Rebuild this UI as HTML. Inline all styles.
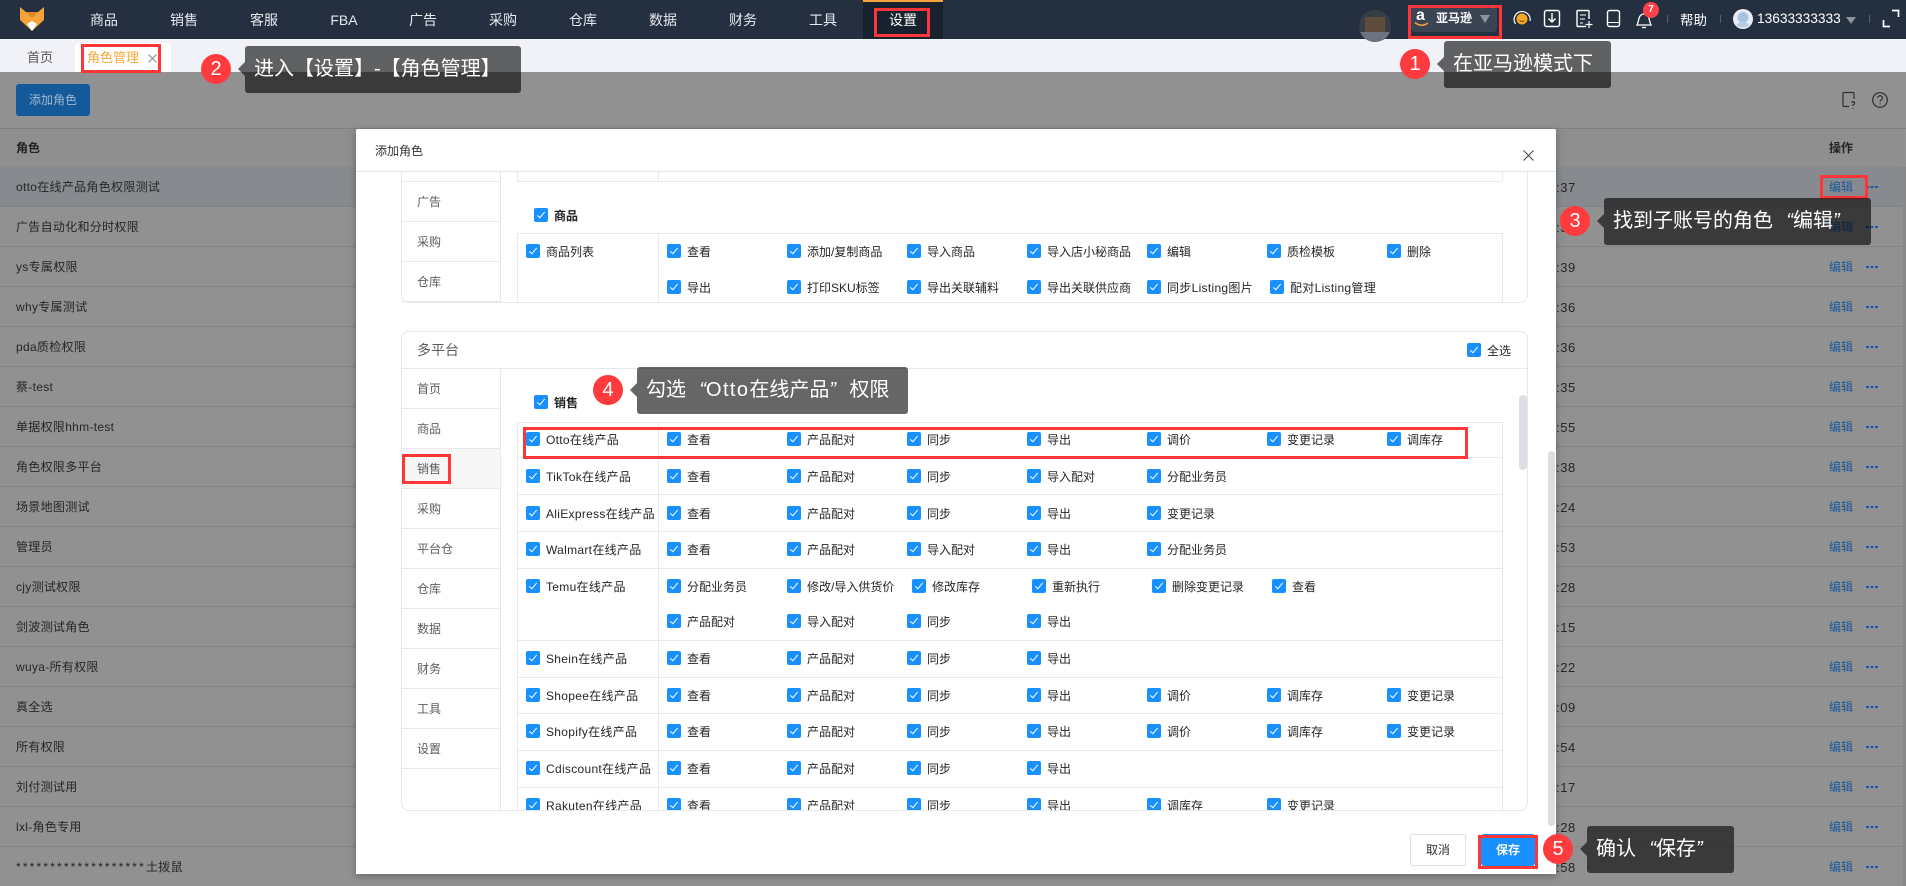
<!DOCTYPE html>
<html lang="zh-CN">
<head>
<meta charset="utf-8">
<title>角色管理</title>
<style>
html,body{margin:0;padding:0;width:1906px;height:886px;overflow:hidden;background:#919191}
body{position:relative;font:12px/1.2 "Liberation Sans","Noto Sans CJK SC",sans-serif;color:#333}
div,span,b,i{position:absolute;white-space:nowrap}
em{font-style:normal}
.qo,.qc{display:inline-block;width:20px;font-style:italic}
.qo{text-align:right}
.qc{text-align:left}
.nav{top:11px;width:80px;text-align:center;font-size:14px;line-height:18px;color:#e6e9ee}
.rb{border:3px solid #ff3538;box-sizing:border-box;z-index:30}
.n{width:30px;height:30px;border-radius:50%;background:#ff3b3d;color:#fff;font-size:20px;line-height:30px;text-align:center;z-index:40}
.t{background:rgba(0,0,0,.6);color:#fff;font-size:20px;line-height:47px;height:47px;border-radius:3px;z-index:40;box-sizing:border-box;padding-left:9px}
.t:before{content:"";position:absolute;left:-7px;top:16px;border:7px solid transparent;border-left:0;border-right-color:rgba(0,0,0,.6)}
.r{left:0;width:1903px;height:40px;border-bottom:1px solid #858585;box-sizing:border-box;line-height:41px;color:#262626}
.r span{top:0}
.r .a{left:16px;letter-spacing:.3px}
.r .a em{letter-spacing:2.17px}
.r .s{left:1556px;font-size:13px;letter-spacing:.6px}
.r .e{left:1829px;color:#1c5a9c}
.r i{left:1866px;top:19px;width:3px;height:2px;background:#1c5a9c;box-shadow:4.5px 0 #1c5a9c,9px 0 #1c5a9c}
.c{height:14px;line-height:17px;padding-left:20px;color:#262626}
.c:before{content:"";position:absolute;left:0;top:0;width:14px;height:14px;background:#1890ff;border-radius:2px}
.c:after{content:"";position:absolute;left:5px;top:2px;width:3px;height:7px;border:solid #fff;border-width:0 1px 1px 0;transform:rotate(40deg)}
.c.l{letter-spacing:.3px}
.c.bd{font-weight:bold;color:#222}
.h{left:517px;width:985px;height:1px;background:#e6e8eb}
.mh{left:401px;width:99px;height:1px;background:#e6e8eb}
.v{width:1px;background:#e6e8eb}
.mi{left:417px;color:#5c5c5c;line-height:16px}
</style>
</head>
<body>

<!-- top bar -->
<div style="left:0;top:0;width:1906px;height:39px;background:#242f40"></div>
<svg style="position:absolute;left:0;top:0" width="60" height="39" viewBox="0 0 60 39">
<polygon points="20,7 26,12 38,12 44,7 44,20 32,31 20,20" fill="#f5a23a"/>
<polygon points="26,12 38,12 32,18" fill="#dc8a2c"/>
<polygon points="27,24 32,21 37,24 32,31" fill="#fff"/>
</svg>
<div class="nav" style="left:64px">商品</div>
<div class="nav" style="left:144px">销售</div>
<div class="nav" style="left:224px">客服</div>
<div class="nav" style="left:304px">FBA</div>
<div class="nav" style="left:383px">广告</div>
<div class="nav" style="left:463px">采购</div>
<div class="nav" style="left:543px">仓库</div>
<div class="nav" style="left:623px">数据</div>
<div class="nav" style="left:703px">财务</div>
<div class="nav" style="left:783px">工具</div>
<div style="left:863px;top:0;width:80px;height:39px;background:#18212e"></div>
<div style="left:863px;top:0;width:80px;height:2px;background:#f5a23a"></div>
<div class="nav" style="left:863px;color:#fff">设置</div>

<!-- avatar blurred -->
<div style="left:1359px;top:10px;width:32px;height:32px;border-radius:50%;overflow:hidden;background:#373d47;z-index:2">
<div style="left:6px;top:7px;width:20px;height:15px;background:#5f4c3a"></div>
<div style="left:0;top:22px;width:32px;height:10px;background:#6d7480"></div>
</div>

<!-- amazon selector -->
<div style="left:1411px;top:6px;width:86px;height:26px;background:#3a4453;border-radius:4px"></div>
<b style="left:1416px;top:7px;font-size:16px;line-height:18px;color:#fff">a</b>
<svg style="position:absolute;left:1414px;top:21px" width="16" height="7" viewBox="0 0 16 7"><path d="M1 1.500C5 5 10 5 14 2" fill="none" stroke="#f5a23a" stroke-width="1.500"/></svg>
<b style="left:1436px;top:11px;font-size:12px;line-height:14px;color:#fff">亚马逊</b>
<div style="left:1480px;top:15px;border:5px solid transparent;border-top:8px solid #8e929a;border-bottom:0"></div>

<!-- top icons -->
<svg style="position:absolute;left:1510px;top:6px" width="150" height="26" viewBox="1510 6 150 26" fill="none">
<circle cx="1522" cy="19" r="5.500" fill="#f5a623"/>
<path d="M1515.500 24A8 8 0 1 1 1530 21" stroke="#fff" stroke-width="1.200"/>
<path d="M1519.500 20.500Q1522 22.500 1524.500 20.500" stroke="#7a4a10"/>
<rect x="1544.500" y="10.500" width="15" height="16" rx="2" stroke="#fff" stroke-width="1.400"/>
<path d="M1552 13V22M1548.500 18.500L1552 22L1555.500 18.500" stroke="#fff" stroke-width="1.400"/>
<path d="M1589 19V11.500a1 1 0 0 0-1-1H1578a1 1 0 0 0-1 1V25.500a1 1 0 0 0 1 1H1586" stroke="#fff" stroke-width="1.400"/>
<path d="M1580 15H1586M1580 19H1585M1580 23H1583" stroke="#fff"/>
<path d="M1589 21V28M1585.500 24.500H1592.500" stroke="#fff" stroke-width="1.200"/>
<rect x="1607.500" y="10.500" width="12" height="16" rx="2" stroke="#fff" stroke-width="1.400"/>
<path d="M1608 22.500H1619" stroke="#fff"/>
<path d="M1637 25C1639 22 1638 14 1644 14C1650 14 1649 22 1651 25Z" stroke="#fff" stroke-width="1.300"/>
<path d="M1642 27.500H1646" stroke="#fff" stroke-width="1.300"/>
</svg>
<div style="left:1643px;top:2px;width:16px;height:16px;border-radius:50%;background:#ff4048;color:#fff;font-size:10px;font-weight:bold;line-height:16px;text-align:center">7</div>
<div style="left:1667px;top:15px;width:1px;height:8px;background:#566072"></div>
<div style="left:1680px;top:12px;font-size:13.500px;line-height:17px;color:#fff">帮助</div>
<div style="left:1720px;top:15px;width:1px;height:8px;background:#566072"></div>
<svg style="position:absolute;left:1733px;top:9px" width="20" height="20" viewBox="0 0 20 20">
<circle cx="10" cy="10" r="10" fill="#e9edf3"/><circle cx="10" cy="8.500" r="5.500" fill="#a9c3e2"/>
<path d="M3.500 16C6 12.500 14 12.500 16.500 16A10 10 0 0 1 3.500 16Z" fill="#b7cbe3"/>
</svg>
<div style="left:1757px;top:11px;font-size:13.700px;line-height:16px;color:#fff">13633333333</div>
<div style="left:1846px;top:17px;border:5.500px solid transparent;border-top:7px solid #8e929a;border-bottom:0"></div>
<div style="left:1869px;top:15px;width:1px;height:8px;background:#566072"></div>
<svg style="position:absolute;left:1882px;top:9px" width="18" height="19" viewBox="0 0 18 19" fill="none" stroke="#fff" stroke-width="1.700">
<path d="M10 1.500H16.500V8M1.500 11V17.500H8"/>
</svg>

<!-- tab bar -->
<div style="left:0;top:39px;width:1906px;height:33px;background:#f0f2f7"></div>
<div style="left:27px;top:50px;font-size:13px;line-height:16px;color:#555">首页</div>
<div style="left:75px;top:43px;width:96px;height:29px;background:#fff;border-radius:4px 4px 0 0"></div>
<div style="left:87px;top:50px;font-size:13px;line-height:16px;color:#f8a83e">角色管理</div>
<svg style="position:absolute;left:148px;top:54px" width="9" height="9" viewBox="0 0 9 9"><path d="M.5 .5L8.500 8.500M8.500 .5L.5 8.500" stroke="#888" fill="none"/></svg>

<!-- masked page -->
<div style="left:16px;top:84px;width:74px;height:32px;background:#145a9b;border-radius:3px;color:#9fb7ce;line-height:32px;text-align:center">添加角色</div>
<svg style="position:absolute;left:1840px;top:90px" width="52" height="20" viewBox="0 0 52 20" fill="none" stroke="#2f2f2f" stroke-width="1.200">
<path d="M14 9V3.500a1 1 0 0 0-1-1H4a1 1 0 0 0-1 1V15.500a1 1 0 0 0 1 1H9"/>
<path d="M11.500 12.500q1.500-2 3 0q.5 1.500-1.500 2.500v1M13 18v.800"/>
<circle cx="40" cy="10" r="7.300"/>
<path d="M37.700 8c0-3 4.800-3 4.800 0c0 1.800-2.400 1.800-2.400 3.800M40.100 13.200v1"/>
</svg>
<div style="left:0;top:128px;width:1906px;height:1px;background:#808080"></div>
<div style="left:0;top:129px;width:1903px;height:38px;background:#8f8f8f;border-bottom:1px solid #858585;box-sizing:content-box"></div>
<b style="left:16px;top:141px;color:#222;line-height:15px">角色</b>
<b style="left:1829px;top:141px;color:#222;line-height:15px">操作</b>
<div style="left:1903px;top:167px;width:3px;height:719px;background:#888"></div>

<div class="r" style="top:167px;background:#878a8e"><span class="a">otto在线产品角色权限测试</span><span class="s">:37</span><span class="e">编辑</span><i></i></div>
<div class="r" style="top:207px"><span class="a">广告自动化和分时权限</span><span class="s">:37</span><span class="e">编辑</span><i></i></div>
<div class="r" style="top:247px"><span class="a">ys专属权限</span><span class="s">:39</span><span class="e">编辑</span><i></i></div>
<div class="r" style="top:287px"><span class="a">why专属测试</span><span class="s">:36</span><span class="e">编辑</span><i></i></div>
<div class="r" style="top:327px"><span class="a">pda质检权限</span><span class="s">:36</span><span class="e">编辑</span><i></i></div>
<div class="r" style="top:367px"><span class="a">蔡-test</span><span class="s">:35</span><span class="e">编辑</span><i></i></div>
<div class="r" style="top:407px"><span class="a">单据权限hhm-test</span><span class="s">:55</span><span class="e">编辑</span><i></i></div>
<div class="r" style="top:447px"><span class="a">角色权限多平台</span><span class="s">:38</span><span class="e">编辑</span><i></i></div>
<div class="r" style="top:487px"><span class="a">场景地图测试</span><span class="s">:24</span><span class="e">编辑</span><i></i></div>
<div class="r" style="top:527px"><span class="a">管理员</span><span class="s">:53</span><span class="e">编辑</span><i></i></div>
<div class="r" style="top:567px"><span class="a">cjy测试权限</span><span class="s">:28</span><span class="e">编辑</span><i></i></div>
<div class="r" style="top:607px"><span class="a">剑波测试角色</span><span class="s">:15</span><span class="e">编辑</span><i></i></div>
<div class="r" style="top:647px"><span class="a">wuya-所有权限</span><span class="s">:22</span><span class="e">编辑</span><i></i></div>
<div class="r" style="top:687px"><span class="a">真全选</span><span class="s">:09</span><span class="e">编辑</span><i></i></div>
<div class="r" style="top:727px"><span class="a">所有权限</span><span class="s">:54</span><span class="e">编辑</span><i></i></div>
<div class="r" style="top:767px"><span class="a">刘付测试用</span><span class="s">:17</span><span class="e">编辑</span><i></i></div>
<div class="r" style="top:807px"><span class="a">lxl-角色专用</span><span class="s">:28</span><span class="e">编辑</span><i></i></div>
<div class="r" style="top:847px"><span class="a"><em>*******************</em>土拨鼠</span><span class="s">:58</span><span class="e">编辑</span><i></i></div>

<!-- modal -->
<div style="left:356px;top:129px;width:1200px;height:745px;background:#fff;box-shadow:0 2px 8px rgba(0,0,0,.3);border-radius:2px 2px 0 0"></div>

<!-- upper card -->
<div style="left:401px;top:150px;width:1127px;height:153px;border:1px solid #e6e8eb;border-top:0;box-sizing:border-box;border-radius:0 0 8px 8px"></div>
<div class="v" style="left:500px;top:172px;height:130px"></div>
<div class="mh" style="top:181px"></div><div class="mh" style="top:221px"></div><div class="mh" style="top:261px"></div><div class="mh" style="top:301px"></div>
<div class="mi" style="top:194px">广告</div>
<div class="mi" style="top:234px">采购</div>
<div class="mi" style="top:274px">仓库</div>
<div class="v" style="left:517px;top:172px;height:9px"></div>
<div class="v" style="left:658px;top:172px;height:9px"></div>
<div class="v" style="left:1502px;top:172px;height:9px"></div>
<div class="h" style="top:181px"></div>
<div class="c bd" style="left:534px;top:208px">商品</div>
<div class="h" style="top:233px"></div>
<div class="v" style="left:517px;top:233px;height:70px"></div>
<div class="v" style="left:658px;top:233px;height:70px"></div>
<div class="v" style="left:1502px;top:233px;height:70px"></div>
<div class="c" style="left:526px;top:244px">商品列表</div>
<div class="c" style="left:667px;top:244px">查看</div>
<div class="c" style="left:787px;top:244px">添加/复制商品</div>
<div class="c" style="left:907px;top:244px">导入商品</div>
<div class="c" style="left:1027px;top:244px">导入店小秘商品</div>
<div class="c" style="left:1147px;top:244px">编辑</div>
<div class="c" style="left:1267px;top:244px">质检模板</div>
<div class="c" style="left:1387px;top:244px">删除</div>
<div class="c" style="left:667px;top:280px">导出</div>
<div class="c" style="left:787px;top:280px">打印SKU标签</div>
<div class="c" style="left:907px;top:280px">导出关联辅料</div>
<div class="c" style="left:1027px;top:280px">导出关联供应商</div>
<div class="c l" style="left:1147px;top:280px">同步Listing图片</div>
<div class="c l" style="left:1270px;top:280px">配对Listing管理</div>

<!-- lower card -->
<div style="left:401px;top:331px;width:1127px;height:480px;border:1px solid #e6e8eb;box-sizing:border-box;border-radius:8px"></div>
<div style="left:401px;top:368px;width:1127px;height:1px;background:#e6e8eb"></div>
<div class="mi" style="top:342px;font-size:14px">多平台</div>
<div class="c" style="left:1467px;top:343px">全选</div>
<div class="v" style="left:500px;top:369px;height:441px"></div>
<div style="left:401px;top:449px;width:99px;height:39px;background:#f7f7f7"></div>
<div class="mh" style="top:408px"></div><div class="mh" style="top:448px"></div><div class="mh" style="top:488px"></div><div class="mh" style="top:528px"></div><div class="mh" style="top:568px"></div><div class="mh" style="top:608px"></div><div class="mh" style="top:648px"></div><div class="mh" style="top:688px"></div><div class="mh" style="top:728px"></div><div class="mh" style="top:768px"></div>
<div class="mi" style="top:381px">首页</div>
<div class="mi" style="top:421px">商品</div>
<div class="mi" style="top:461px">销售</div>
<div class="mi" style="top:501px">采购</div>
<div class="mi" style="top:541px">平台仓</div>
<div class="mi" style="top:581px">仓库</div>
<div class="mi" style="top:621px">数据</div>
<div class="mi" style="top:661px">财务</div>
<div class="mi" style="top:701px">工具</div>
<div class="mi" style="top:741px">设置</div>

<div class="c bd" style="left:534px;top:395px">销售</div>

<div style="left:0;top:0;width:1906px;height:810px;overflow:hidden">
<div class="h" style="top:422px"></div>
<div class="h" style="top:457px"></div>
<div class="h" style="top:494px"></div>
<div class="h" style="top:531px"></div>
<div class="h" style="top:568px"></div>
<div class="h" style="top:640px"></div>
<div class="h" style="top:677px"></div>
<div class="h" style="top:713px"></div>
<div class="h" style="top:750px"></div>
<div class="h" style="top:787px"></div>
<div class="v" style="left:517px;top:422px;height:388px"></div>
<div class="v" style="left:658px;top:422px;height:388px"></div>
<div class="v" style="left:1502px;top:422px;height:388px"></div>

<div class="c l" style="left:526px;top:432px">Otto在线产品</div>
<div class="c" style="left:667px;top:432px">查看</div>
<div class="c" style="left:787px;top:432px">产品配对</div>
<div class="c" style="left:907px;top:432px">同步</div>
<div class="c" style="left:1027px;top:432px">导出</div>
<div class="c" style="left:1147px;top:432px">调价</div>
<div class="c" style="left:1267px;top:432px">变更记录</div>
<div class="c" style="left:1387px;top:432px">调库存</div>

<div class="c l" style="left:526px;top:469px">TikTok在线产品</div>
<div class="c" style="left:667px;top:469px">查看</div>
<div class="c" style="left:787px;top:469px">产品配对</div>
<div class="c" style="left:907px;top:469px">同步</div>
<div class="c" style="left:1027px;top:469px">导入配对</div>
<div class="c" style="left:1147px;top:469px">分配业务员</div>

<div class="c l" style="left:526px;top:506px">AliExpress在线产品</div>
<div class="c" style="left:667px;top:506px">查看</div>
<div class="c" style="left:787px;top:506px">产品配对</div>
<div class="c" style="left:907px;top:506px">同步</div>
<div class="c" style="left:1027px;top:506px">导出</div>
<div class="c" style="left:1147px;top:506px">变更记录</div>

<div class="c l" style="left:526px;top:542px">Walmart在线产品</div>
<div class="c" style="left:667px;top:542px">查看</div>
<div class="c" style="left:787px;top:542px">产品配对</div>
<div class="c" style="left:907px;top:542px">导入配对</div>
<div class="c" style="left:1027px;top:542px">导出</div>
<div class="c" style="left:1147px;top:542px">分配业务员</div>

<div class="c l" style="left:526px;top:579px">Temu在线产品</div>
<div class="c" style="left:667px;top:579px">分配业务员</div>
<div class="c" style="left:787px;top:579px">修改/导入供货价</div>
<div class="c" style="left:912px;top:579px">修改库存</div>
<div class="c" style="left:1032px;top:579px">重新执行</div>
<div class="c" style="left:1152px;top:579px">删除变更记录</div>
<div class="c" style="left:1272px;top:579px">查看</div>
<div class="c" style="left:667px;top:614px">产品配对</div>
<div class="c" style="left:787px;top:614px">导入配对</div>
<div class="c" style="left:907px;top:614px">同步</div>
<div class="c" style="left:1027px;top:614px">导出</div>

<div class="c l" style="left:526px;top:651px">Shein在线产品</div>
<div class="c" style="left:667px;top:651px">查看</div>
<div class="c" style="left:787px;top:651px">产品配对</div>
<div class="c" style="left:907px;top:651px">同步</div>
<div class="c" style="left:1027px;top:651px">导出</div>

<div class="c l" style="left:526px;top:688px">Shopee在线产品</div>
<div class="c" style="left:667px;top:688px">查看</div>
<div class="c" style="left:787px;top:688px">产品配对</div>
<div class="c" style="left:907px;top:688px">同步</div>
<div class="c" style="left:1027px;top:688px">导出</div>
<div class="c" style="left:1147px;top:688px">调价</div>
<div class="c" style="left:1267px;top:688px">调库存</div>
<div class="c" style="left:1387px;top:688px">变更记录</div>

<div class="c l" style="left:526px;top:724px">Shopify在线产品</div>
<div class="c" style="left:667px;top:724px">查看</div>
<div class="c" style="left:787px;top:724px">产品配对</div>
<div class="c" style="left:907px;top:724px">同步</div>
<div class="c" style="left:1027px;top:724px">导出</div>
<div class="c" style="left:1147px;top:724px">调价</div>
<div class="c" style="left:1267px;top:724px">调库存</div>
<div class="c" style="left:1387px;top:724px">变更记录</div>

<div class="c l" style="left:526px;top:761px">Cdiscount在线产品</div>
<div class="c" style="left:667px;top:761px">查看</div>
<div class="c" style="left:787px;top:761px">产品配对</div>
<div class="c" style="left:907px;top:761px">同步</div>
<div class="c" style="left:1027px;top:761px">导出</div>

<div class="c l" style="left:526px;top:798px">Rakuten在线产品</div>
<div class="c" style="left:667px;top:798px">查看</div>
<div class="c" style="left:787px;top:798px">产品配对</div>
<div class="c" style="left:907px;top:798px">同步</div>
<div class="c" style="left:1027px;top:798px">导出</div>
<div class="c" style="left:1147px;top:798px">调库存</div>
<div class="c" style="left:1267px;top:798px">变更记录</div>
</div>

<!-- modal header (covers card overflow) -->
<div style="left:356px;top:129px;width:1200px;height:43px;background:#fff;border-bottom:1px solid #e4e6e8;box-sizing:border-box;border-radius:2px 2px 0 0"></div>
<div style="left:375px;top:143px;color:#333;line-height:16px">添加角色</div>
<svg style="position:absolute;left:1523px;top:150px" width="11" height="11" viewBox="0 0 11 11"><path d="M.5 .5L10.500 10.500M10.500 .5L.5 10.500" stroke="#444" fill="none"/></svg>

<!-- scrollbars -->
<div style="left:1519px;top:395px;width:8px;height:75px;background:#dddee3;border-radius:4px"></div>
<div style="left:1548px;top:451px;width:7px;height:375px;background:#dcdde2;border-radius:4px"></div>

<!-- footer -->
<div style="left:1410px;top:834px;width:56px;height:32px;border:1px solid #dcdfe6;box-sizing:border-box;border-radius:3px;background:#fff;line-height:30px;text-align:center;color:#333">取消</div>
<div style="left:1481px;top:834px;width:54px;height:32px;background:#1890ff;border-radius:3px;line-height:32px;text-align:center;color:#fff;font-weight:bold">保存</div>

<!-- red boxes -->
<div class="rb" style="left:874px;top:8px;width:56px;height:29px"></div>
<div class="rb" style="left:1408px;top:5px;width:94px;height:34px"></div>
<div class="rb" style="left:81px;top:44px;width:80px;height:29px"></div>
<div class="rb" style="left:1820px;top:175px;width:48px;height:24px"></div>
<div class="rb" style="left:402px;top:454px;width:49px;height:30px"></div>
<div class="rb" style="left:523px;top:427px;width:945px;height:32px"></div>
<div class="rb" style="left:1478px;top:835px;width:60px;height:34px"></div>

<!-- callouts -->
<div class="n" style="left:1400px;top:49px">1</div>
<div class="t" style="left:1444px;top:41px;width:167px">在亚马逊模式下</div>
<div class="n" style="left:201px;top:54px">2</div>
<div class="t" style="left:245px;top:46px;width:276px">进入【设置】-【角色管理】</div>
<div class="n" style="left:1560px;top:206px">3</div>
<div class="t" style="left:1604px;top:198px;width:267px">找到子账号的角色<em class="qo">“</em>编辑<em class="qc">”</em></div>
<div class="n" style="left:593px;top:375px">4</div>
<div class="t" style="left:637px;top:367px;width:271px">勾选<em class="qo">“</em><em style="letter-spacing:1.400px">Otto</em>在线产品<em class="qc">”</em>权限</div>
<div class="n" style="left:1543px;top:834px">5</div>
<div class="t" style="left:1587px;top:826px;width:147px">确认<em class="qo">“</em>保存<em class="qc">”</em></div>

</body>
</html>
